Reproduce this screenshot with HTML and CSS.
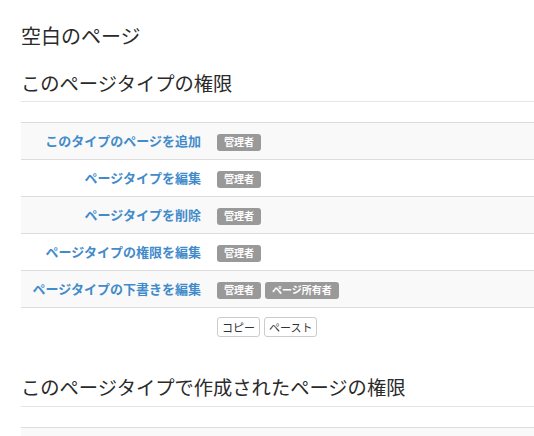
FILE: index.html
```html
<!DOCTYPE html>
<html lang="ja">
<head>
<meta charset="utf-8">
<link rel="stylesheet" href="styles.css">
</head>
<body>
<div class="page">
  <h1 class="title">空白のページ</h1>
  <h2 class="section">このページタイプの権限</h2>
  <table class="perm">
    <tr><th>このタイプのページを追加</th><td><span class="badge">管理者</span></td></tr>
    <tr><th>ページタイプを編集</th><td><span class="badge">管理者</span></td></tr>
    <tr><th>ページタイプを削除</th><td><span class="badge">管理者</span></td></tr>
    <tr><th>ページタイプの権限を編集</th><td><span class="badge">管理者</span></td></tr>
    <tr><th>ページタイプの下書きを編集</th><td><span class="badge">管理者</span><span class="badge">ページ所有者</span></td></tr>
  </table>
  <div class="actions">
    <button class="btn">コピー</button>
    <button class="btn">ペースト</button>
  </div>
  <h2 class="section second">このページタイプで作成されたページの権限</h2>
  <table class="perm">
    <tr><th>&nbsp;</th><td></td></tr>
  </table>
</div>
</body>
</html>
```

FILE: styles.css
```css
html, body {
  margin: 0;
  padding: 0;
  background: #fff;
  overflow: hidden;
}
body {
  font-family: "Noto Sans CJK JP", "Liberation Sans", sans-serif;
  color: #333;
  font-size: 13px;
}
.page {
  padding: 0 0 0 21px;
}
.title {
  margin: 0;
  padding-top: 23px;
  font-size: 20px;
  font-weight: 400;
  line-height: 26px;
  color: #2a2a2a;
}
.section {
  margin: 21px 0 0;
  font-size: 19.3px;
  font-weight: 400;
  line-height: 26px;
  padding-bottom: 5px;
  border-bottom: 1px solid #e5e5e5;
  color: #2a2a2a;
}
.section.second {
  margin-top: 37px;
  padding-bottom: 6px;
}
.perm {
  margin-top: 20px;
  width: 100%;
  border-collapse: collapse;
  border-bottom: 1px solid #ddd;
}
.perm th, .perm td {
  border-top: 1px solid #ddd;
  padding: 8px;
  height: 20px;
  line-height: 20px;
  vertical-align: middle;
}
.perm th {
  width: 172px;
  text-align: right;
  color: #428bca;
  font-weight: 700;
  font-size: 13px;
  white-space: nowrap;
}
.perm tr:nth-child(odd) {
  background: #f9f9f9;
}
.badge {
  display: inline-block;
  background: #999;
  color: #fff;
  font-size: 10px;
  font-weight: 700;
  line-height: 12px;
  padding: 2px 7px 3px;
  border-radius: 3px;
  margin-right: 4px;
  vertical-align: middle;
}
.actions {
  padding: 9px 0 0 196px;
  display: flex;
  gap: 4px;
}
.btn {
  font-family: "Noto Sans CJK JP", sans-serif;
  font-size: 11px;
  line-height: 16px;
  padding: 1px 4px;
  background: #fff;
  color: #333;
  border: 1px solid #ccc;
  border-radius: 3px;
  margin: 0;
}
```
